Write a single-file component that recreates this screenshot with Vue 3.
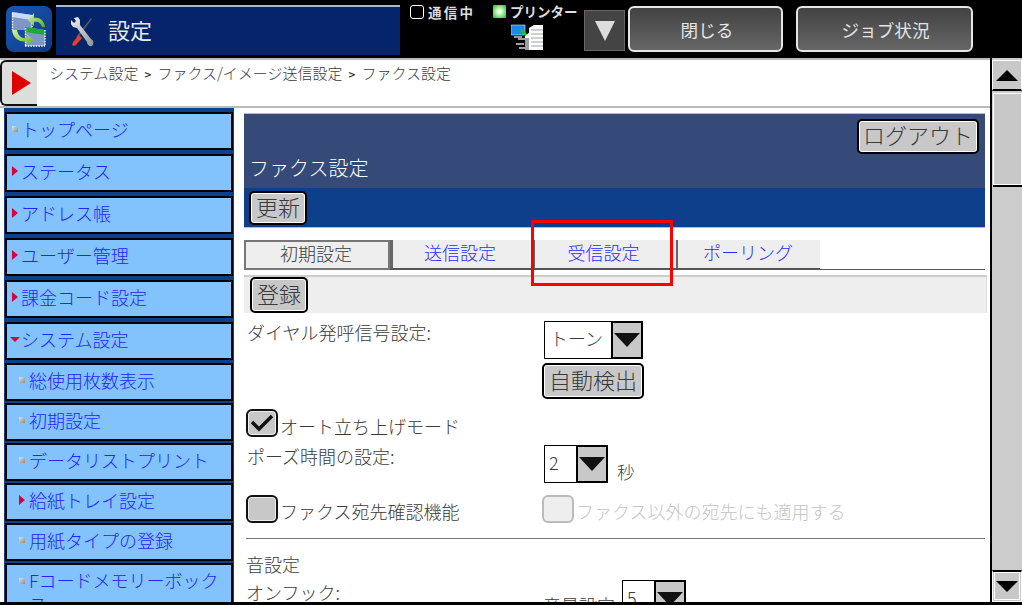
<script setup>
const menu = [
  { label: 'トップページ', mark: 'sq' },
  { label: 'ステータス', mark: 'right' },
  { label: 'アドレス帳', mark: 'right' },
  { label: 'ユーザー管理', mark: 'right' },
  { label: '課金コード設定', mark: 'right' },
  { label: 'システム設定', mark: 'down' },
]
const sub = [
  { label: '総使用枚数表示', mark: 'sq' },
  { label: '初期設定', mark: 'sq' },
  { label: 'データリストプリント', mark: 'sq' },
  { label: '給紙トレイ設定', mark: 'right' },
  { label: '用紙タイプの登録', mark: 'sq' },
  { label: 'Fコードメモリーボックス', mark: 'sq' },
]
const tabs = [
  { label: '初期設定', active: true, w: 146 },
  { label: '送信設定', w: 143 },
  { label: '受信設定', w: 143 },
  { label: 'ポーリング', w: 144 },
]
</script>

<template>
  <div class="screen">
    <header class="top">
      <svg class="logo" width="46" height="46" viewBox="0 0 46 46">
        <defs>
          <linearGradient id="lg" x1="0" y1="0" x2="1" y2="1">
            <stop offset="0" stop-color="#1c56b4" />
            <stop offset="1" stop-color="#0d3a86" />
          </linearGradient>
          <linearGradient id="ar1" x1="0" y1="0" x2="1" y2="1">
            <stop offset="0" stop-color="#d8f0a0" />
            <stop offset="1" stop-color="#58b02a" />
          </linearGradient>
        </defs>
        <rect width="46" height="46" rx="8" fill="url(#lg)" />
        <path d="M6 6 L26 9 V24 H6 Z" fill="#7f97c8" />
        <path d="M6 6 L26 9 V14 L6 11 Z" fill="#c4dcf8" />
        <path d="M6.500 7 V24 M26 9 V24" stroke="#fff" stroke-width="1.400" stroke-dasharray="1.500 1.200" fill="none" />
        <path d="M19 21 L39 24 V40 H19 Z" fill="#7f97c8" />
        <path d="M19 21 L39 24 V29 L19 26 Z" fill="#22a83a" />
        <path d="M19.500 22 V40 M39 24 V40 M19 40 H39" stroke="#fff" stroke-width="1.400" stroke-dasharray="1.500 1.200" fill="none" />
        <path d="M39 21 C38 14 33 11 28 12 L28 7 L22 14 L28 20 L28 16 C32 15 35 17 36 21 Z" fill="url(#ar1)" />
        <path d="M6 24 C7 32 13 37 21 35 L21 40 L28 34 L21 28 L21 32 C16 33 12 30 11 24 Z" fill="url(#ar1)" />
      </svg>
      <div class="title-bar">
        <svg width="24" height="30" viewBox="0 0 24 30">
          <defs>
            <linearGradient id="wr" x1="0" y1="0" x2="1" y2="1">
              <stop offset="0" stop-color="#f2f2f2" />
              <stop offset="1" stop-color="#8e9296" />
            </linearGradient>
          </defs>
          <path d="M21 1 L22 2 L8 21 L6 20 Z" fill="#555a60" />
          <path d="M9 18 L3 25 L2 28 L4 29 L6 28 L12 21 Z" fill="#e0402c" />
          <path d="M4 1 L8 0 L10 3 L10 8 L21 22 C24 23 24 27 22 29 C20 30 17 28 17 25 L7 11 L3 10 L1 7 L1 3 L4 6 L6 4 Z" fill="url(#wr)" />
        </svg>
        <span class="title-text">設定</span>
      </div>
      <div class="status">
        <div class="stat-row">
          <span class="stat-item"><i class="led-off"></i><span class="spaced">通信中</span></span>
          <span class="stat-item second"><i class="led-on"></i>プリンター</span>
        </div>
        <svg class="printer" width="32" height="26" viewBox="0 0 32 26">
          <rect x="0" y="1" width="14" height="10" fill="#1c8be8" stroke="#cfe6fb" stroke-width=".6" />
          <rect x="3" y="12" width="8" height="2" fill="#8e9aa4" />
          <path d="M9 7 L15 12 L13 13 L19 14 L18 9 L16 10 L11 5 Z" fill="#22c22e" />
          <path d="M7 15 H14 M5 20 H13 M8 24 H14" stroke="#9aa0a6" stroke-width="2" />
          <path d="M18 4 L23 1 H32 V26 H14 V12 L18 9 Z" fill="#fff" />
          <path d="M14 14 H18 V26 H14 Z" fill="#9aa0a6" />
          <path d="M20 6 H32 M20 10 H32 M20 14 H32 M20 18 H32 M20 22 H32" stroke="#9aa0a6" />
        </svg>
      </div>
      <button class="drop"><i class="drop-arrow"></i></button>
      <button class="head-btn close">閉じる</button>
      <button class="head-btn job">ジョブ状況</button>
    </header>

    <div class="body">
      <div class="left">
        <div class="crumb">
          <button class="crumb-btn"><i class="crumb-arrow"></i></button>
          <div class="crumb-text">
            システム設定<span class="sep">&gt;</span>ファクス/イメージ送信設定<span class="sep">&gt;</span>ファクス設定
          </div>
        </div>

        <div class="main">
          <nav class="side">
            <a v-for="m in menu" :key="m.label" class="item">
              <i :class="'mk-' + m.mark"></i>{{ m.label }}
            </a>
            <a v-for="m in sub" :key="m.label" class="item subitem">
              <i :class="'mk-' + m.mark"></i><span>{{ m.label }}</span>
            </a>
          </nav>

          <section class="content">
            <div class="banner">
              <div class="banner-top">
                <button class="btn logout">ログアウト</button>
                <h1 class="banner-title">ファクス設定</h1>
              </div>
              <div class="banner-bar">
                <button class="btn update">更新</button>
              </div>
            </div>

            <div class="tabs">
              <div v-for="t in tabs" :key="t.label" class="tab" :class="{ active: t.active }" :style="{ width: t.w + 'px' }">{{ t.label }}</div>
            </div>
            <div class="red-box"></div>

            <div class="form-bar">
              <button class="btn reg">登録</button>
            </div>

            <div class="row row-dial">
              <div class="lbl">ダイヤル発呼信号設定:</div>
              <div class="col">
                <div class="select tone"><span class="sel-val">トーン</span><span class="sel-arrow"><i></i></span></div>
                <button class="btn detect">自動検出</button>
              </div>
            </div>

            <div class="row row-auto">
              <span class="check"><svg width="24" height="18" viewBox="0 0 24 18"><path d="M2 8 L9 15 L22 2" fill="none" stroke="#111" stroke-width="3.400" /></svg></span>
              <span class="check-lbl">オート立ち上げモード</span>
            </div>

            <div class="row row-pause">
              <div class="lbl">ポーズ時間の設定:</div>
              <div class="select num"><span class="sel-val digit">2</span><span class="sel-arrow"><i></i></span></div>
              <span class="sec">秒</span>
            </div>

            <div class="row row-conf">
              <div class="conf-left">
                <span class="check"></span>
                <span class="check-lbl">ファクス宛先確認機能</span>
              </div>
              <span class="check disabled"></span>
              <span class="check-lbl muted">ファクス以外の宛先にも適用する</span>
            </div>

            <hr class="rule" />

            <div class="snd">音設定</div>
            <div class="row row-hook">
              <div class="lbl hook">オンフック:</div>
              <span class="vol">音量設定</span>
              <div class="select num small"><span class="sel-val digit">5</span><span class="sel-arrow"><i></i></span></div>
            </div>
          </section>
        </div>
      </div>

      <aside class="scroll">
        <button class="sb-btn up"><i></i></button>
        <div class="sb-track"><div class="sb-thumb"></div></div>
        <button class="sb-btn down"><i></i></button>
      </aside>
    </div>
    <div class="foot"></div>
  </div>
</template>

<style>
html, body { margin: 0; background: #000; }
</style>

<style scoped>
.screen {
  width: 1022px;
  height: 605px;
  display: flex;
  flex-direction: column;
  overflow: hidden;
  background: #fff;
  font-family: "Noto Sans CJK JP", "Noto Sans", sans-serif;
  font-weight: 300;
  color: #3a3a3a;
  font-size: 18px;
}
button { font-family: inherit; font-weight: inherit; padding: 0; cursor: default; }
h1 { margin: 0; font: inherit; }
i { display: block; font-style: normal; }

/* header */
.top {
  height: 58px;
  flex: none;
  background: #000;
  display: flex;
  align-items: flex-start;
  box-sizing: border-box;
}
.logo { margin: 6px 4px 0 6px; flex: none; }
.title-bar {
  width: 344px;
  height: 50px;
  margin-top: 5px;
  box-sizing: border-box;
  border-top: 2px solid #a9b6d8;
  background: #05246c;
  display: flex;
  align-items: center;
  padding-left: 14px;
  gap: 14px;
  flex: none;
}
.title-bar svg { margin-top: 1px; }
.title-text { color: #e8e8e8; font-size: 22px; font-weight: 400; margin-top: -5px; }
.status { width: 184px; flex: none; padding-left: 10px; box-sizing: border-box; }
.stat-row { display: flex; height: 20px; margin-top: 2px; color: #ddd; font-size: 13.500px; font-weight: 700; line-height: 20px; }
.stat-item { display: flex; align-items: center; gap: 4px; }
.spaced { letter-spacing: 2.200px; }
.stat-item.second { margin-left: 18px; margin-top: -2px; }
.led-off { width: 12px; height: 12px; border: 1px solid #fff; border-radius: 3px; }
.led-on { width: 13px; height: 13px; background: radial-gradient(circle, #f0fff0 15%, #28d828 85%); border-radius: 1px; }
.printer { display: block; margin: 2px 0 0 101px; }
.drop {
  width: 41px;
  height: 41px;
  margin-top: 10px;
  box-sizing: border-box;
  background: #444;
  border: 1px solid #666;
  display: flex;
  align-items: center;
  justify-content: center;
  flex: none;
}
.drop-arrow {
  width: 0; height: 0;
  border-left: 10px solid transparent;
  border-right: 10px solid transparent;
  border-top: 20px solid #ddd;
}
.head-btn {
  height: 46px;
  margin-top: 6px;
  box-sizing: border-box;
  border: 2px solid #e6e6e6;
  border-radius: 6px;
  background: linear-gradient(#424242, #666);
  color: #e4e4e4;
  font-size: 17.600px;
  font-weight: 400;
  flex: none;
}
.close { width: 155px; margin-left: 3px; padding-left: 3px; }
.job { width: 177px; margin-left: 13px; padding-left: 2px; }

/* body */
.body { flex: 1; min-height: 0; display: flex; }
.left { width: 990px; flex: none; display: flex; flex-direction: column; min-height: 0; }
.crumb {
  height: 50px;
  flex: none;
  box-sizing: border-box;
  border-top: 2px solid #bbb;
  border-bottom: 2px solid #bbb;
  display: flex;
  background: #fff;
}
.crumb-btn {
  width: 37px;
  box-sizing: border-box;
  background: #dcdedc;
  border: 2px solid #111;
  border-right: 0;
  border-radius: 6px 0 0 6px;
  display: flex;
  align-items: center;
  justify-content: center;
}
.crumb-arrow {
  width: 0; height: 0;
  border-top: 12px solid transparent;
  border-bottom: 12px solid transparent;
  border-left: 19px solid #e00000;
  margin-left: 3px;
}
.crumb-text { margin-left: 12px; font-size: 15px; line-height: 22px; margin-top: 2px; }
.sep { font-size: 12px; font-weight: 500; color: #333; margin: 0 6px; }

.main { flex: 1; min-height: 0; display: flex; overflow: hidden; }

/* sidebar */
.side {
  width: 230px;
  margin-left: 4px;
  flex: none;
  background: #0e3f8a;
  padding-top: 4px;
  box-sizing: border-box;
  display: flex;
  flex-direction: column;
  gap: 4px;
}
.item {
  height: 38px;
  flex: none;
  margin: 0 1px;
  box-sizing: border-box;
  border: 2px solid #000;
  background: #82c3fd;
  color: #2424ff;
  display: flex;
  align-items: center;
  font-size: 18px;
  padding: 0 0 4px 5px;
  white-space: nowrap;
}
.subitem { padding-left: 12px; font-size: 18px; gap: 0; margin-bottom: -2px; }
.subitem:nth-of-type(7) { margin-top: -1px; }
.subitem:last-child { height: 70px; align-items: flex-start; padding-top: 3px; margin-bottom: 0; white-space: normal; }
.subitem:last-child span { line-height: 24px; width: 200px; }
.subitem:last-child i { margin-top: 10px; }
i[class^="mk-"] { flex: none; margin-right: 3px; }
.subitem i[class^="mk-"] { margin-right: 4px; }
.mk-sq {
  width: 6px; height: 6px;
  background: linear-gradient(135deg, #e4e4e4, #8a8a8a);
  box-sizing: border-box;
  margin-left: 0;
}
.mk-right {
  width: 0; height: 0;
  border-top: 5px solid transparent;
  border-bottom: 5px solid transparent;
  border-left: 6px solid #d8003c;
}
.mk-down {
  width: 0; height: 0;
  margin-left: -2px;
  margin-right: 1px !important;
  border-left: 5px solid transparent;
  border-right: 5px solid transparent;
  border-top: 5px solid #d8003c;
}

/* content */
.content {
  width: 741px;
  margin-left: 10px;
  flex: none;
  position: relative;
  padding-top: 5px;
  box-sizing: border-box;
}
.banner-top {
  height: 75px;
  box-sizing: border-box;
  background: #354a78;
  border-top: 1px solid #bbb;
  position: relative;
  padding-left: 5px;
  padding-top: 41px;
}
.banner-title { color: #fff; font-size: 20px; line-height: 26px; }
.banner-bar {
  height: 40px;
  box-sizing: border-box;
  background: #0e3f8a;
  padding: 3px 0 0 5px;
  border-bottom: 1px solid #bbb;
}
.btn {
  box-sizing: border-box;
  background: #c8c8c8;
  border: 2px solid #000;
  border-radius: 5px;
  box-shadow: inset 0 0 0 1px #fff;
  color: #3a3a3a;
  font-size: 22px;
  line-height: 1;
  display: flex;
  align-items: center;
  justify-content: center;
  padding-bottom: 5px;
}
.logout { position: absolute; top: 5px; right: 6px; width: 122px; height: 35px; }
.update { width: 58px; height: 34px; }
.tabs {
  display: flex;
  margin-top: 12px;
  height: 30px;
  box-sizing: border-box;
  border-bottom: 1px solid #555;
}
.tab {
  height: 29px;
  background: #eee;
  color: #2a2aff;
  font-size: 18px;
  line-height: 25px;
  text-align: center;
  box-sizing: border-box;
  border-left: 2px solid #666;
  border-bottom: 1px solid #555;
  padding-right: 4px;
  flex: none;
}
.tab:nth-child(2) { border-left: 3px solid #666; padding-right: 6px; }
.tab:nth-child(4) { padding-right: 2px; }
.tab.active {
  background: #eee;
  color: #3a3a3a;
  border: 2px solid #777;
  height: 30px;
  line-height: 23px;
  padding-right: 2px;
}
.red-box {
  position: absolute;
  left: 287px;
  top: 112px;
  width: 142px;
  height: 66px;
  box-sizing: border-box;
  border: 3px solid #f00;
}
.form-bar {
  margin-top: 5px;
  height: 38px;
  box-sizing: border-box;
  background: #eee;
  border-top: 2px solid #ccc;
  border-right: 1px solid #ddd;
  padding: 0 0 0 6px;
  margin-right: -2px;
}
.reg { width: 58px; height: 36px; margin-top: 0; }

/* form */
.row { display: flex; padding-left: 3px; align-items: flex-start; }
.lbl { width: 297px; flex: none; font-size: 18px; line-height: 24px; }
.row-dial { margin-top: 8px; }
.row-dial .lbl { margin-top: -1px; }
.col { display: flex; flex-direction: column; align-items: flex-start; gap: 4px; }
.select {
  display: flex;
  height: 38px;
  box-sizing: border-box;
  border: 1px solid #000;
  background: #fff;
}
.tone { width: 99px; }
.num { width: 64px; }
.sel-val { flex: 1; font-size: 18px; line-height: 33px; padding-left: 5px; }
.digit { font-size: 18px; padding-left: 4px; line-height: 32px; }
.sel-arrow {
  width: 32px;
  box-sizing: border-box;
  background: #c8c8c8;
  border: 2px solid #000;
  margin: -1px -1px -1px 0;
  display: flex;
  align-items: center;
  justify-content: center;
}
.sel-arrow i {
  width: 0; height: 0;
  border-left: 13px solid transparent;
  border-right: 13px solid transparent;
  border-top: 14px solid #111;
}
.detect { width: 102px; height: 36px; margin-left: -2px; }
.row-auto { margin-top: 10px; height: 28px; align-items: flex-start; padding-left: 2px; }
.check {
  width: 32px;
  height: 28px;
  flex: none;
  box-sizing: border-box;
  background: #c8c8c8;
  border: 2px solid #111;
  border-radius: 6px;
  box-shadow: inset 0 0 0 1px #eee;
  display: flex;
  align-items: center;
  justify-content: center;
}
.check.disabled { background: #eee; border-color: #bbb; box-shadow: none; }
.check-lbl { font-size: 18px; line-height: 28px; margin-left: 2px; height: 28px; }
.row-auto .check-lbl { padding-top: 3px; }
.row-conf .check-lbl { padding-top: 2px; }
.check-lbl.muted { color: #c4c4c4; }
.row-pause { margin-top: 8px; height: 38px; }
.row-pause .lbl { line-height: 24px; margin-top: -1px; }
.sec { margin-left: 9px; font-size: 17.600px; margin-top: 14px; }
.row-conf { margin-top: 12px; height: 28px; padding-left: 2px; align-items: flex-start; }
.conf-left { width: 296px; display: flex; align-items: flex-start; flex: none; }
.rule { border: 0; border-top: 1px solid #777; margin: 15px 0 0 2px; height: 0; }
.snd { margin: 13px 0 0 2px; line-height: 24px; font-size: 18px; }
.row-hook { margin-top: 4px; padding-left: 2px; }
.hook { width: 297px; }
.vol { font-size: 18px; margin-top: 12px; width: 79px; flex: none; white-space: nowrap; }
.small { margin-top: 0; }

/* scrollbar */
.scroll {
  width: 32px;
  flex: none;
  box-sizing: border-box;
  border-left: 2px solid #000;
  background: #ccc;
  display: flex;
  flex-direction: column;
}
.sb-btn {
  height: 32px;
  box-sizing: border-box;
  flex: none;
  background: #c8c8c8;
  border: 1px solid #fff;
  display: flex;
  align-items: center;
  justify-content: center;
}
.sb-btn i { width: 0; height: 0; border-left: 11px solid transparent; border-right: 11px solid transparent; }
.up { height: 31px; margin-top: 2px; border: 1px solid #fff; border-bottom: 2px solid #000; }
.up i { border-bottom: 11px solid #000; }
.down { border-top: 2px solid #000; outline: 1px solid #fff; outline-offset: -3px; }
.down i { border-top: 11px solid #000; }
.sb-track { flex: 1; min-height: 0; padding-top: 2px; }
.sb-thumb {
  height: 92px;
  box-sizing: border-box;
  margin-left: 1px;
  background: #c8c8c8;
  border: 1px solid #fff;
  box-shadow: 0 2px 0 #000;
}
.foot { height: 3px; background: #000; flex: none; }
</style>
